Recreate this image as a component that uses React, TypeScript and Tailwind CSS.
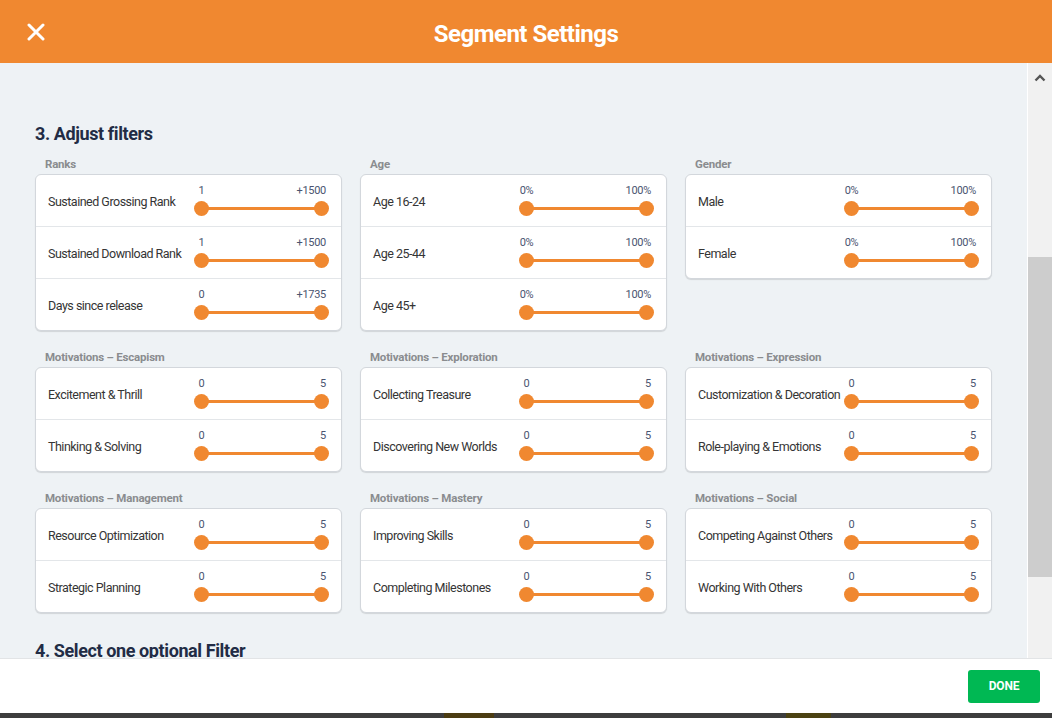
import React from 'react'

type Row = { label: string; min: string; max: string }
type Group = { title: string; rows: Row[] }

const pct = (label: string): Row => ({ label, min: '0%', max: '100%' })
const mot = (label: string): Row => ({ label, min: '0', max: '5' })

const topGroups: Group[] = [
  {
    title: 'Ranks',
    rows: [
      { label: 'Sustained Grossing Rank', min: '1', max: '+1500' },
      { label: 'Sustained Download Rank', min: '1', max: '+1500' },
      { label: 'Days since release', min: '0', max: '+1735' },
    ],
  },
  { title: 'Age', rows: [pct('Age 16-24'), pct('Age 25-44'), pct('Age 45+')] },
  { title: 'Gender', rows: [pct('Male'), pct('Female')] },
]

const midGroups: Group[] = [
  { title: 'Motivations – Escapism', rows: [mot('Excitement & Thrill'), mot('Thinking & Solving')] },
  { title: 'Motivations – Exploration', rows: [mot('Collecting Treasure'), mot('Discovering New Worlds')] },
  { title: 'Motivations – Expression', rows: [mot('Customization & Decoration'), mot('Role-playing & Emotions')] },
]

const lowGroups: Group[] = [
  { title: 'Motivations – Management', rows: [mot('Resource Optimization'), mot('Strategic Planning')] },
  { title: 'Motivations – Mastery', rows: [mot('Improving Skills'), mot('Completing Milestones')] },
  { title: 'Motivations – Social', rows: [mot('Competing Against Others'), mot('Working With Others')] },
]

function RangeSlider({ min, max }: { min: string; max: string }) {
  return (
    <div className="relative w-[135px] h-full mr-[12px] shrink-0">
      {/* значения */}
      <span className="absolute top-[8.5px] left-[7.5px] -translate-x-1/2 text-[11px] leading-[14px] text-[#4a5470] tracking-[-0.3px]">
        {min}
      </span>
      <span className="absolute top-[8.5px] right-[3px] text-[11px] leading-[14px] text-[#4a5470] tracking-[-0.3px]">
        {max}
      </span>
      {/* дорожка */}
      <div className="absolute top-[32px] left-[7.5px] right-[7.5px] h-[3px] bg-[#f08830] rounded-full" />
      <div className="absolute top-[26px] left-0 w-[15px] h-[15px] rounded-full bg-[#f08830]" />
      <div className="absolute top-[26px] right-0 w-[15px] h-[15px] rounded-full bg-[#f08830]" />
    </div>
  )
}

function FilterCard({ group }: { group: Group }) {
  return (
    <div className="w-[307px]">
      <div className="pl-[10px] h-[16px] mb-[3px] text-[11.5px] leading-[19px] font-bold text-[#8a8c8f] tracking-[-0.2px]">
        {group.title}
      </div>
      <div className="bg-white border border-[#d3d7dc] rounded-[6px] shadow-[0_1px_1px_rgba(0,0,0,0.12)]">
        {group.rows.map((row, i) => (
          <div
            key={row.label}
            className={`flex items-center h-[51px] ${i > 0 ? 'border-t border-[#e3e6e9] h-[52px]' : ''}`}
          >
            <div className="flex-1 min-w-0 pl-[12px] pt-[3px] whitespace-nowrap text-[12.5px] text-[#353535] tracking-[-0.5px]">
              {row.label}
            </div>
            <RangeSlider min={row.min} max={row.max} />
          </div>
        ))}
      </div>
    </div>
  )
}

export default function App() {
  return (
    <div
      className="w-[1052px] h-[718px] flex flex-col overflow-hidden bg-[#3d3d3d]"
      style={{ fontFamily: 'Roboto, "Noto Sans", sans-serif' }}
    >
      {/* Шапка */}
      <header className="h-[63px] shrink-0 bg-[#f08830] grid grid-cols-[1fr_auto_1fr] items-center">
        <div className="pl-[27px] pt-[1px]">
          <svg width="18" height="18" viewBox="0 0 18 18" fill="none">
            <path d="M2 2 L16 16 M16 2 L2 16" stroke="white" strokeWidth="3" strokeLinecap="round" />
          </svg>
        </div>
        <h1 className="text-white font-bold text-[24px] tracking-[-0.5px] pt-[5px]">Segment Settings</h1>
        <div />
      </header>

      {/* Содержимое */}
      <div className="h-[595px] shrink-0 flex">
        <div className="flex-1 overflow-hidden bg-[#eef2f5] pl-[35px] pt-[59px]">
          <h2 className="text-[18px] leading-[24px] font-bold text-[#222c45] tracking-[-0.4px]">3. Adjust filters</h2>
          <div className="mt-[9px] flex gap-[18px] items-start">
            {topGroups.map((g) => (
              <FilterCard key={g.title} group={g} />
            ))}
          </div>
          <div className="mt-[17px] flex gap-[18px] items-start">
            {midGroups.map((g) => (
              <FilterCard key={g.title} group={g} />
            ))}
          </div>
          <div className="mt-[17px] flex gap-[18px] items-start">
            {lowGroups.map((g) => (
              <FilterCard key={g.title} group={g} />
            ))}
          </div>
          <h2 className="mt-[26px] text-[18px] leading-[24px] font-bold text-[#222c45] tracking-[-0.4px]">
            4. Select one optional Filter
          </h2>
        </div>
        {/* Полоса прокрутки */}
        <div className="w-[25px] shrink-0 bg-[#f1f1f1] border-l border-white flex flex-col">
          <div className="h-[30px] flex items-center justify-center">
            <svg width="12" height="8" viewBox="0 0 12 8" fill="none">
              <path d="M1.5 6.5 L6 2 L10.5 6.5" stroke="#555" strokeWidth="2.4" />
            </svg>
          </div>
          <div className="mt-[164px] h-[320px] bg-[#cdcdcd]" />
        </div>
      </div>

      {/* Подвал */}
      <footer className="h-[55px] shrink-0 bg-white border-t border-[#e2e4e6] flex items-center justify-end pr-[12px]">
        <button className="w-[72px] h-[33px] rounded-[3px] bg-[#00b853] text-white text-[12px] font-bold tracking-[-0.2px]">
          DONE
        </button>
      </footer>
      <div className="flex-1 flex">
        <div className="w-[444px]" />
        <div className="w-[50px] bg-[#4b3c12]" />
        <div className="w-[292px]" />
        <div className="w-[45px] bg-[#4b4212]" />
      </div>
    </div>
  )
}
